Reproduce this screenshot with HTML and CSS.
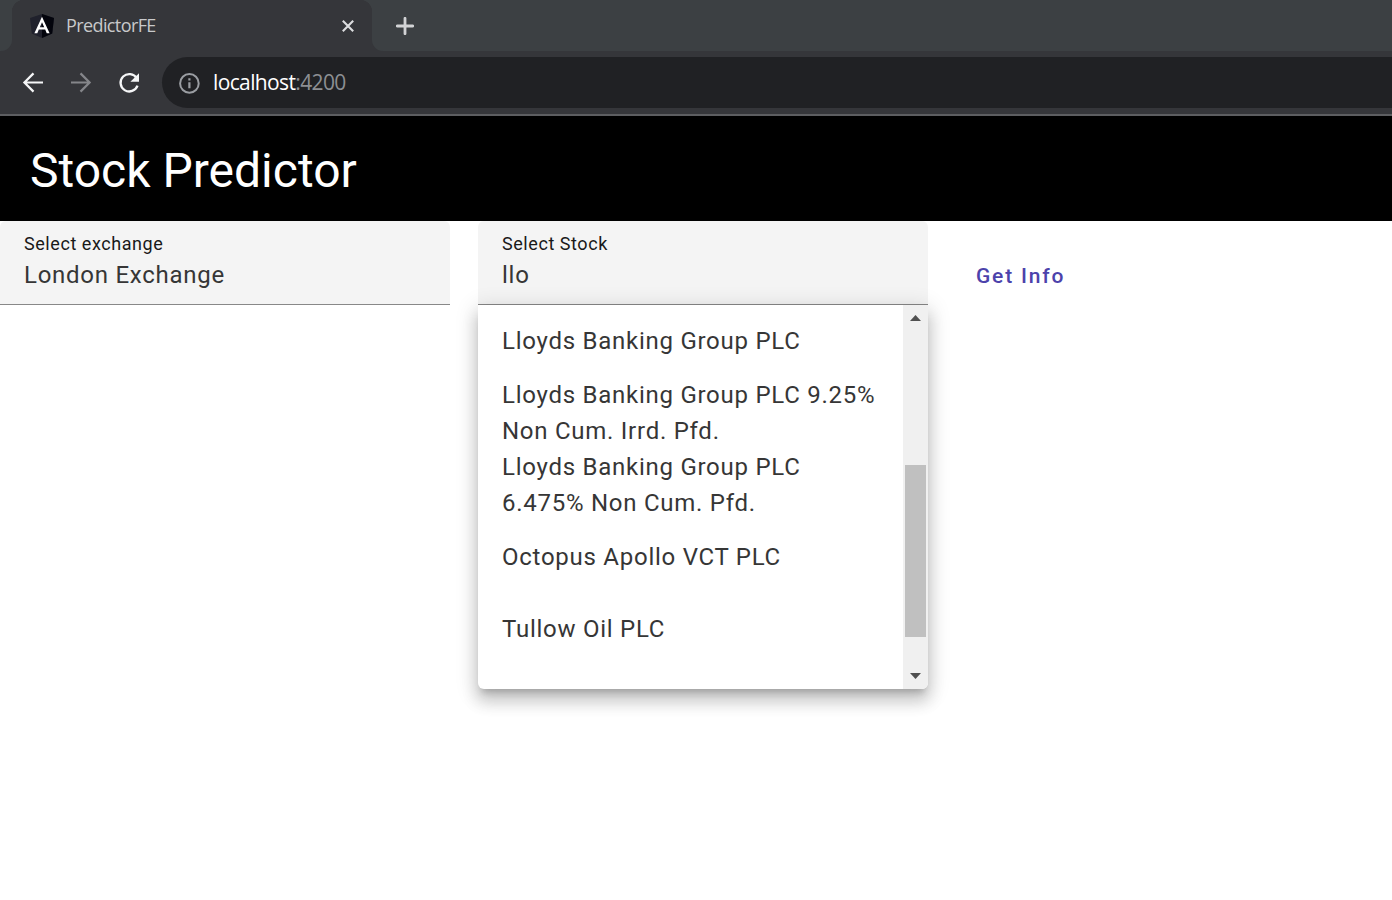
FILE: index.html
```html
<!DOCTYPE html>
<html lang="en">
<head>
<meta charset="utf-8">
<title>PredictorFE</title>
<link rel="stylesheet" href="styles.css">
</head>
<body>
<header class="browser">
  <div class="tab-strip">
    <div class="tab-gap"></div>
    <div class="tab">
      <svg class="favicon" width="24" height="24" viewBox="0 0 24 24"><path d="M12 0 24 4 22.2 19.5 12 24 1.800 19.500 0 4Z" fill="#20212c"/><path d="M12 0 24 4 22.200 19.500 12 24Z" fill="#03040c"/><path fill-rule="evenodd" d="M12 2.800 4.400 19.200H7.300L8.800 15.500H15.200L16.700 19.200H19.600ZM12 8.200 14.200 13.200H9.800Z" fill="#fff"/></svg>
      <span class="tab-title">PredictorFE</span>
      <svg class="tab-close" width="12" height="12" viewBox="0 0 12 12"><path d="M.8.8 11.200 11.200M11.200.8.8 11.200" stroke="#dcdddf" stroke-width="2.100"/></svg>
    </div>
    <div class="tab-rest">
      <svg width="18" height="18" viewBox="0 0 18 18"><path d="M9 1.300V16.700M1.300 9H16.700" stroke="#d2d3d5" stroke-width="2.800" stroke-linecap="round"/></svg>
    </div>
  </div>
  <div class="toolbar">
    <svg class="nav-icon" width="24" height="24" viewBox="0 0 24 24"><path d="M22 11.500H3.500M12.500 2.400 3.400 11.500l9.100 9.100" fill="none" stroke="#f5f6f7" stroke-width="2.200"/></svg>
    <svg class="nav-icon" width="24" height="24" viewBox="0 0 24 24"><path d="M2 11.500H20.500M11.500 2.400 20.600 11.500 11.500 20.600" fill="none" stroke="#85868a" stroke-width="2.200"/></svg>
    <svg class="nav-icon" width="24" height="24" viewBox="0 0 24 24"><path d="M19.700 7.200A8.700 8.700 0 1 0 20.500 14.600" fill="none" stroke="#f5f6f7" stroke-width="2.300"/><path d="M22 2.200V10.800H13.400Z" fill="#f5f6f7"/></svg>
    <div class="address">
      <svg class="info" width="22" height="22" viewBox="0 0 22 22"><circle cx="11.400" cy="11.400" r="9.300" fill="none" stroke="#9a9da2" stroke-width="2"/><path d="M11.400 10.200V16.200M11.400 6.200V8.400" stroke="#9a9da2" stroke-width="2.200"/></svg>
      <span class="url"><span class="host">localhost</span><span class="port">:4200</span></span>
    </div>
  </div>
</header>
<main>
  <h1 class="banner">Stock Predictor</h1>
  <div class="controls">
    <div class="field">
      <div class="field-label">Select exchange</div>
      <div class="field-value">London Exchange</div>
    </div>
    <div class="field">
      <div class="field-label">Select Stock</div>
      <div class="field-value">llo</div>
      <div class="panel">
        <div class="options">
          <div class="option">Lloyds Banking Group PLC</div>
          <div class="option">Lloyds Banking Group PLC 9.25% Non Cum. Irrd. Pfd.</div>
          <div class="option">Lloyds Banking Group PLC 6.475% Non Cum. Pfd.</div>
          <div class="option">Octopus Apollo VCT PLC</div>
          <div class="option">Tullow Oil PLC</div>
        </div>
        <div class="scrollbar">
          <svg width="11" height="6" viewBox="0 0 11 6"><path d="M0 6 5.500 0 11 6Z" fill="#505050"/></svg>
          <div class="thumb"></div>
          <svg width="11" height="6" viewBox="0 0 11 6"><path d="M0 0H11L5.500 6Z" fill="#505050"/></svg>
        </div>
      </div>
    </div>
    <button class="get-info">Get Info</button>
  </div>
</main>
</body>
</html>
```
FILE: styles.css
```css
* { box-sizing: border-box; }
body {
  margin: 0;
  height: 900px;
  overflow: hidden;
  background: #fff;
  font-family: Roboto, "Liberation Sans", sans-serif;
}
svg { display: block; flex: none; }

.browser {
  height: 116px;
  background: #35363a;
  border-bottom: 2px solid #5d5e61;
  font-family: "Open Sans", "Noto Sans", sans-serif;
}
.tab-strip { display: flex; height: 51px; }
.tab-gap {
  width: 12px;
  background: #3c4043;
  border-bottom-right-radius: 11px;
}
.tab {
  display: flex;
  align-items: center;
  width: 360px;
  padding: 0 18px;
  background: radial-gradient(circle at 12px 12px, #35363a 12px, #3c4043 12.500px) 0 0 / 12px 12px no-repeat,
    radial-gradient(circle at 0 12px, #35363a 12px, #3c4043 12.500px) 100% 0 / 12px 12px no-repeat;
}
.tab-title {
  margin-left: 12px;
  padding-bottom: 2px;
  color: #c8c9cb;
  font-size: 18px;
  line-height: 24px;
  letter-spacing: -0.600px;
}
.tab-close { margin-left: auto; }
.tab-rest {
  display: flex;
  align-items: center;
  flex: 1;
  padding-left: 24px;
  background: #3c4043;
  border-bottom-left-radius: 11px;
}
.toolbar {
  display: flex;
  align-items: center;
  gap: 24px;
  height: 63px;
  padding-left: 21px;
}
.address {
  display: flex;
  align-items: center;
  flex: 1;
  height: 51px;
  margin-left: -3px;
  padding-left: 16px;
  border-radius: 26px 0 0 26px;
  background: #202124;
  font-size: 21px;
  line-height: 28px;
}
.url {
  margin-left: 13px;
  padding-bottom: 2px;
  letter-spacing: -0.630px;
}
.host { color: #fff; }
.port { color: #8d8f93; }

.banner {
  height: 105px;
  margin: 0;
  padding: 0 30px;
  background: #000;
  color: #fff;
  font-size: 48px;
  font-weight: 400;
  line-height: 110px;
}
.controls { display: flex; align-items: flex-start; }
.field {
  position: relative;
  width: 450px;
  height: 84px;
  margin-right: 28px;
  padding: 12px 24px 0;
  background: #f4f4f4;
  border-bottom: 1px solid #888;
  border-radius: 6px 6px 0 0;
}
.field-label {
  color: #191919;
  font-size: 18px;
  line-height: 22px;
  letter-spacing: 0.560px;
}
.field-value {
  margin-top: 2px;
  color: #363636;
  font-size: 24px;
  line-height: 36px;
  letter-spacing: 0.740px;
}
.panel {
  position: absolute;
  top: 84px;
  left: 0;
  display: flex;
  width: 450px;
  height: 384px;
  overflow: hidden;
  background: #fff;
  border-radius: 0 0 6px 6px;
  box-shadow: 0 7.500px 7.500px -4.500px rgba(0, 0, 0, .2),
    0 12px 15px 1.500px rgba(0, 0, 0, .14),
    0 4.500px 21px 3px rgba(0, 0, 0, .12);
}
.options { flex: 1; }
.option {
  display: flex;
  align-items: center;
  height: 72px;
  padding: 0 24px;
  color: #363636;
  font-size: 24px;
  line-height: 36px;
  letter-spacing: 0.740px;
}
.scrollbar {
  display: flex;
  flex-direction: column;
  align-items: center;
  width: 25px;
  padding: 10px 0;
  background: #f0f0f0;
}
.thumb {
  width: 21px;
  height: 172px;
  margin: 144px 0 36px;
  background: #c0c0c0;
}
.get-info {
  margin: 28px 0 0;
  padding: 0 20px;
  border: 0;
  background: none;
  color: #4c42ab;
  font: 500 21px/54px Roboto, "Liberation Sans", sans-serif;
  letter-spacing: 1.800px;
}
```
